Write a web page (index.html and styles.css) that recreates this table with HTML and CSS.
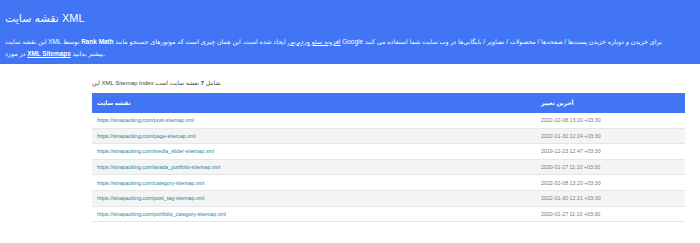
FILE: index.html
```html
<!DOCTYPE html>
<html lang="fa">
<head>
<meta charset="utf-8">
<title>نقشه سایت XML</title>
<link rel="stylesheet" href="styles.css">
</head>
<body>
<header class="site-header">
  <h1 class="title">نقشه سایت XML</h1>
  <p class="expl">این نقشه سایت XML توسط <b>Rank Math</b> <a class="plugin-link" href="#">افزونه سئو وردپرس</a> ایجاد شده است. این همان چیزی است که موتورهای جستجو مانند Google برای خزیدن و دوباره خزیدن پست‌ها / صفحه‌ها / محصولات / تصاویر / بایگانی‌ها در وب سایت شما استفاده می کنند<br>در مورد <a class="more-link" href="#">XML Sitemaps</a> بیشتر بدانید.</p>
</header>
<main class="content">
  <p class="count">این XML Sitemap Index شامل <strong>7</strong> نقشه سایت است.</p>
  <table class="sitemap">
    <thead>
      <tr><th class="col-url">نقشه سایت</th><th class="col-date">آخرین تغییر</th></tr>
    </thead>
    <tbody>
      <tr><td><a href="#">https://sinapacking.com/post-sitemap.xml</a></td><td class="date">2022-02-08 13:20 +03:30</td></tr>
      <tr><td><a href="#">https://sinapacking.com/page-sitemap.xml</a></td><td class="date">2022-01-30 12:24 +03:30</td></tr>
      <tr><td><a href="#">https://sinapacking.com/media_slider-sitemap.xml</a></td><td class="date">2019-12-23 12:47 +03:30</td></tr>
      <tr><td><a href="#">https://sinapacking.com/avada_portfolio-sitemap.xml</a></td><td class="date">2020-01-27 11:10 +03:30</td></tr>
      <tr><td><a href="#">https://sinapacking.com/category-sitemap.xml</a></td><td class="date">2022-02-08 13:20 +03:30</td></tr>
      <tr><td><a href="#">https://sinapacking.com/post_tag-sitemap.xml</a></td><td class="date">2022-01-30 12:21 +03:30</td></tr>
      <tr><td><a href="#">https://sinapacking.com/portfolio_category-sitemap.xml</a></td><td class="date">2020-01-27 11:10 +03:30</td></tr>
    </tbody>
  </table>
</main>
</body>
</html>
```
FILE: styles.css
```css
html, body {
  margin: 0;
  padding: 0;
  background: #ffffff;
}
body {
  font-family: "Liberation Sans", "DejaVu Sans", sans-serif;
  color: #545353;
}
.site-header {
  background: #4275f4;
  color: #ffffff;
  padding: 5px 5px 4px;
}
.title {
  margin: 7px 0 0;
  font-size: 11px;
  line-height: 13px;
  font-weight: normal;
}
.expl {
  margin: 11px 0 0;
  font-size: 6.4px;
  line-height: 12px;
}
.expl b {
  font-weight: bold;
}
.plugin-link {
  color: #ffffff;
  text-decoration: underline;
}
.more-link {
  color: #ffffff;
  font-weight: bold;
  text-decoration: underline;
}
.content {
  margin: 0 15px 0 92px;
}
.count {
  margin: 14px 0 5px;
  font-size: 6px;
  line-height: 10px;
  color: #444444;
}
.sitemap {
  width: 100%;
  border-collapse: collapse;
}
.sitemap th {
  background: #4275f4;
  color: #ffffff;
  text-align: left;
  font-size: 5.8px;
  font-weight: bold;
  height: 20px;
  padding: 0 5px;
}
.sitemap .col-date {
  width: 139px;
}
.sitemap td {
  font-size: 5.3px;
  height: 14.6px;
  padding: 0 5px;
  border-bottom: 1px solid #e6e6e6;
}
.sitemap tbody tr:nth-child(even) td {
  background: #f4f4f4;
}
.sitemap td a {
  color: #2a7f97;
  text-decoration: none;
}
.sitemap td.date {
  color: #7a7a7a;
}
```
